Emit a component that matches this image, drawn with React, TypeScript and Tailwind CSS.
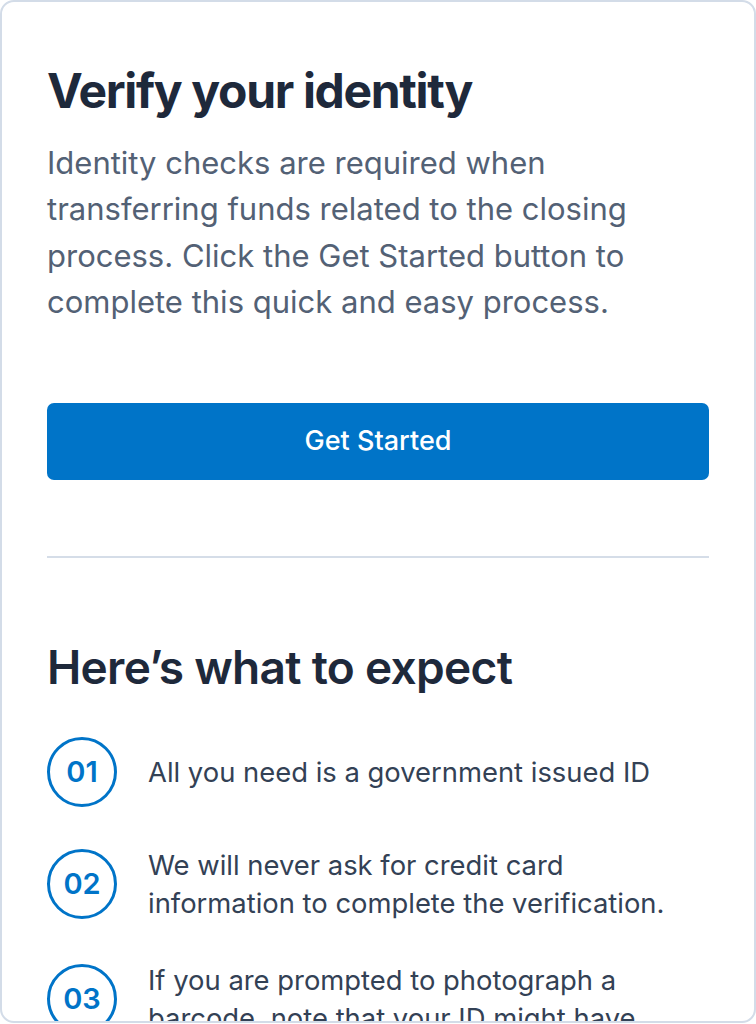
import React from "react";

const items = [
  { n: "01", t: "All you need is a government issued ID" },
  { n: "02", t: "We will never ask for credit card information to complete the verification." },
  { n: "03", t: "If you are prompted to photograph a barcode, note that your ID might have" },
];

export default function App() {
  return (
    <div
      className="w-[756px] h-[1024px] bg-white"
      style={{ fontFamily: "Inter, 'Noto Sans', sans-serif" }}
    >
      <div className="h-[1023px] overflow-hidden rounded-[14px] border-2 border-[#d3dce8] bg-white px-[45px] pt-[60px]">
        <h1 className="text-[48px] leading-[1.2] font-bold tracking-[-0.028em] text-[#1e293b]">
          Verify your identity
        </h1>
        <p className="mt-[20px] max-w-[630px] text-[31px] leading-[46.5px] text-[#536175]">
          Identity checks are required when transferring funds related to the closing process. Click the Get Started button to complete this quick and easy process.
        </p>
        <button className="mt-[77px] flex h-[77px] w-full items-center justify-center rounded-[7px] bg-[#0074c8] text-[27px] font-medium text-white">
          Get Started
        </button>
        <div className="mt-[76px] h-[2px] bg-[#d5dde8]" />
        <h2 className="mt-[82px] text-[46px] leading-[1.2] font-semibold tracking-[-0.015em] text-[#1e293b]">
          Here’s what to expect
        </h2>
        <ul className="mt-[42px] flex flex-col gap-[39px]">
          {items.map((it) => (
            <li key={it.n} className="flex items-center gap-[31px]">
              <div className="flex h-[70px] w-[70px] shrink-0 items-center justify-center rounded-full border-[3px] border-[#0074c8] text-[29px] font-semibold text-[#0074c8]">
                {it.n}
              </div>
              <div className="max-w-[540px] text-[27.4px] leading-[38px] text-[#334155]">
                {it.t}
              </div>
            </li>
          ))}
        </ul>
      </div>
    </div>
  );
}
